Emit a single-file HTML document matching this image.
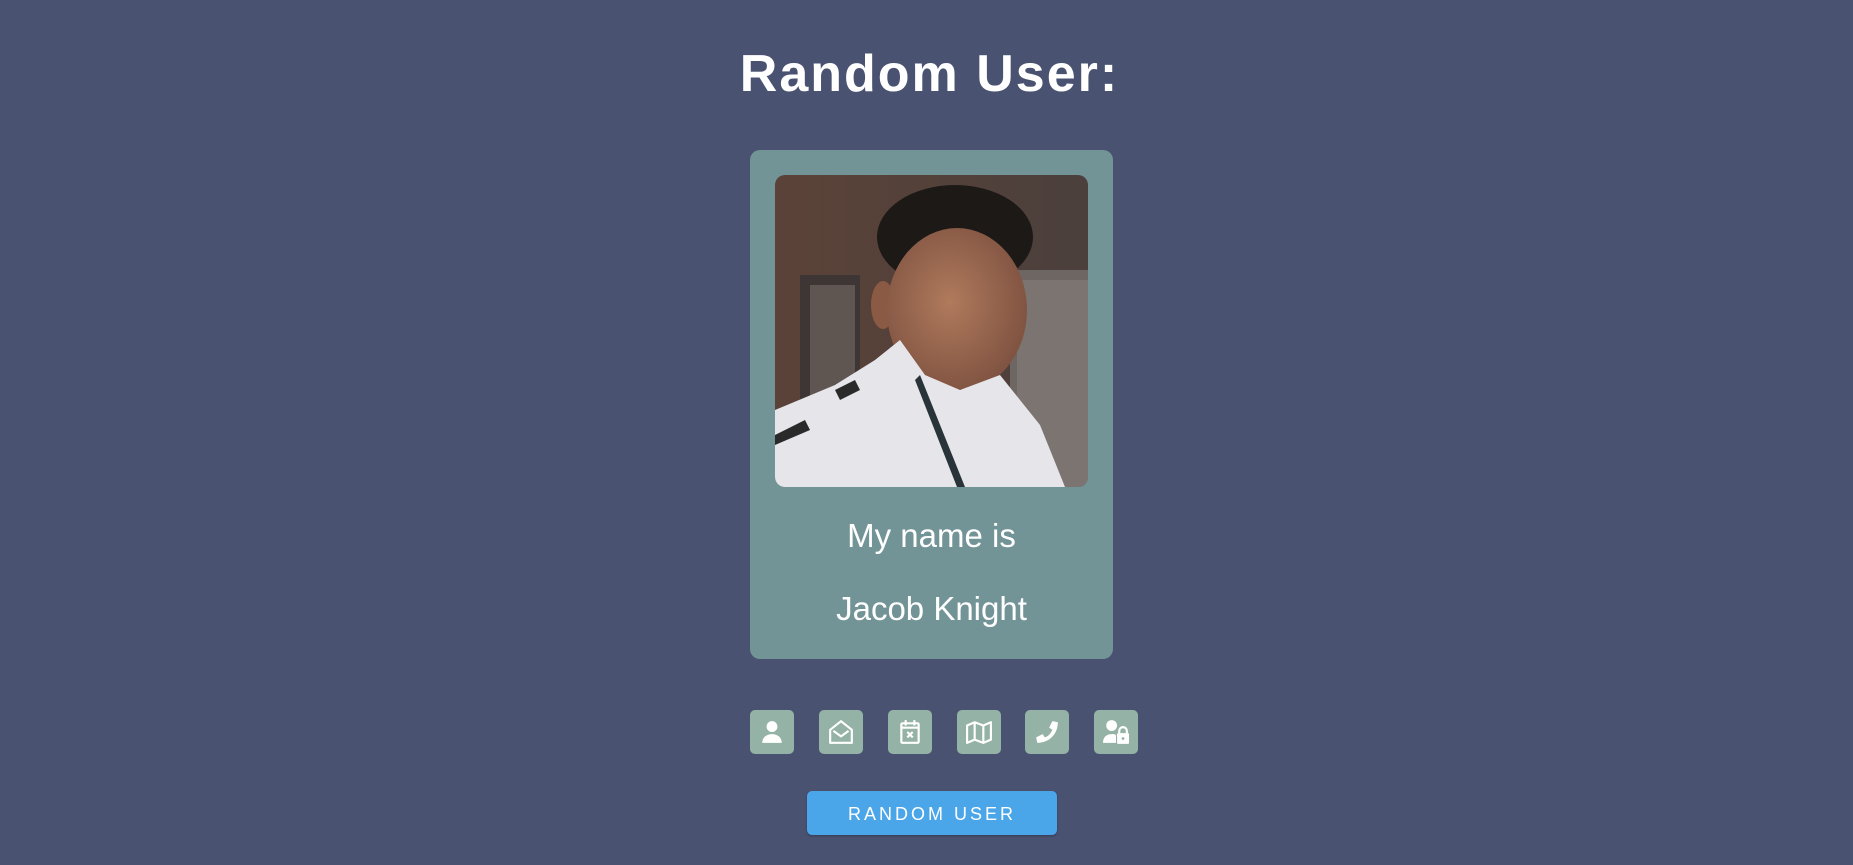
<!DOCTYPE html>
<html><head><meta charset="utf-8">
<style>
html,body{margin:0;padding:0;background:#4a5271;width:1853px;height:865px;overflow:hidden;font-family:"Liberation Sans",Arial,sans-serif;}
h1{position:absolute;left:0;width:1853px;top:40px;margin:0;text-align:center;color:#fff;font-size:52px;font-weight:bold;letter-spacing:2px;line-height:68px;padding-left:6px;box-sizing:border-box;}
.card{position:absolute;left:750px;top:150px;width:363px;height:509px;background:#739497;border-radius:10px;}
.photo{position:absolute;left:25px;top:25px;width:313px;height:312px;border-radius:10px;overflow:hidden;}
.t{position:absolute;left:0;width:363px;text-align:center;color:#fff;font-size:33px;line-height:36px;}
.ic{position:absolute;top:710px;width:44px;height:44px;background:#95b2a6;border-radius:5px;}
.ic svg{position:absolute;left:9px;top:9px;width:26px;height:26px;}
.btn{position:absolute;left:807px;top:791px;width:250px;height:44px;background:#4ba6e9;border-radius:5px;color:#fff;font-size:18px;letter-spacing:3px;text-align:center;line-height:46px;box-shadow:0 1px 2px rgba(0,0,0,.3);}
</style></head><body>
<h1>Random User:</h1>
<div class="card">
 <div class="photo">
  <svg width="313" height="312" viewBox="0 0 313 312">
   <defs><linearGradient id="bg" x1="0" y1="0" x2="1" y2="0"><stop offset="0" stop-color="#5b4238"/><stop offset="1" stop-color="#4b403c"/></linearGradient>
   <radialGradient id="fc" cx="0.45" cy="0.45" r="0.6"><stop offset="0" stop-color="#b07a5c"/><stop offset="1" stop-color="#7d5140"/></radialGradient></defs>
   <rect width="313" height="312" fill="url(#bg)"/>
   <rect x="25" y="100" width="60" height="130" fill="#3e3634"/>
   <rect x="35" y="110" width="45" height="120" fill="#5f5652"/>
   <rect x="235" y="95" width="78" height="217" fill="#6e6663"/>
   <rect x="242" y="105" width="71" height="207" fill="#7c7470"/>
   <ellipse cx="180" cy="62" rx="78" ry="52" fill="#1d1917"/>
   <ellipse cx="108" cy="130" rx="12" ry="24" fill="#8a5a44"/>
   <ellipse cx="182" cy="135" rx="70" ry="82" fill="url(#fc)"/>
   <path d="M0 235 L60 210 L100 185 L125 165 L150 200 L185 215 L225 200 L265 250 L290 312 L0 312Z" fill="#e6e6ea"/>
   <path d="M60 215 L80 205 L85 215 L65 225Z M0 260 L30 245 L35 255 L0 270Z" fill="#2a2a2a"/>
   <path d="M145 200 L190 312 L182 312 L140 205Z" fill="#28343a"/>
  </svg>
 </div>
 <div class="t" style="top:368px">My name is</div>
 <div class="t" style="top:441px">Jacob Knight</div>
</div>
<div class="ic" style="left:750px"><svg viewBox="0 0 24 24" fill="#fff"><circle cx="12" cy="7" r="5"/><path d="M3 22c0-5 4-8 9-8s9 3 9 8z"/></svg></div>
<div class="ic" style="left:819px"><svg viewBox="0 0 24 24" fill="none" stroke="#fff" stroke-width="2" stroke-linejoin="round"><path d="M2 10 L12 2 L22 10 V22 H2Z"/><path d="M5 11 L12 16 L19 11"/></svg></div>
<div class="ic" style="left:888px"><svg viewBox="0 0 24 24" fill="none" stroke="#fff" stroke-width="2"><rect x="4" y="4" width="16" height="18" rx="1"/><path d="M8 1v5M16 1v5M4 8h16M9.5 12l5 5M14.5 12l-5 5"/></svg></div>
<div class="ic" style="left:957px"><svg viewBox="0 0 24 24" fill="none" stroke="#fff" stroke-width="2" stroke-linejoin="round"><path d="M1 6 L8 3 L16 6 L23 3 V19 L16 22 L8 19 L1 22Z M8 3V19 M16 6V22"/></svg></div>
<div class="ic" style="left:1025px"><svg viewBox="0 0 24 24" fill="#fff"><path d="M22 3 L17 2 L14 8 L17 10 C15 14 13 16 10 17 L8 14 L2 17 L3 22 C14 22 22 14 22 3Z"/></svg></div>
<div class="ic" style="left:1094px"><svg viewBox="0 0 24 24" fill="#fff"><circle cx="8" cy="6" r="5"/><path d="M0 22c0-5 3-8 8-8 2 0 3 0 4 1v7z"/><path d="M15 13v-2a3.5 3.5 0 0 1 7 0v2" fill="none" stroke="#fff" stroke-width="2"/><rect x="13" y="13" width="11" height="10" rx="1"/><circle cx="18.5" cy="18" r="1.3" fill="#95b2a6"/></svg></div>
<div class="btn">RANDOM USER</div>
</body></html>
